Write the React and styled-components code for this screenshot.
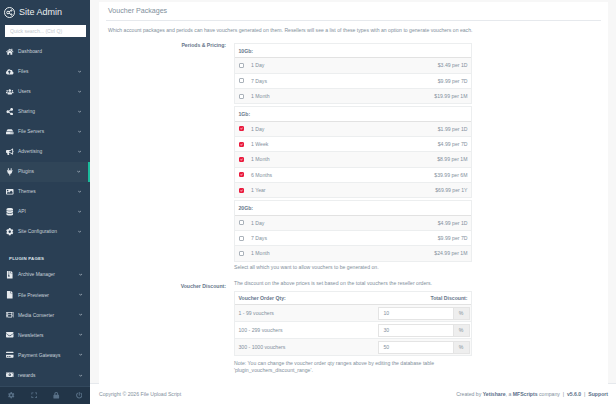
import React from "react";
import styled, { createGlobalStyle } from "styled-components";
import {
  FaHome, FaCloudUploadAlt, FaUsers, FaShareAlt, FaHdd, FaBullhorn, FaPlug, FaImage, FaDatabase, FaCog,
  FaFileArchive, FaFile, FaFilm, FaEnvelope, FaCreditCard, FaMoneyBillAlt, FaChevronDown, FaLock, FaPowerOff, FaExpand,
} from "react-icons/fa";

const GlobalStyle = createGlobalStyle`
  html, body { margin: 0; padding: 0; height: 100%; overflow: hidden; }
  body { font-family: "Liberation Sans", Arial, sans-serif; color: #828f9c; background: #f7f7f7; }
`;

const Page = styled.div`
  display: flex;
  width: 616px;
  height: 404px;
  overflow: hidden;
`;

const Sidebar = styled.aside`
  width: 90px;
  flex: none;
  display: flex;
  flex-direction: column;
  background: #2a3f54;
`;
const Brand = styled.div`
  height: 24px;
  display: flex;
  align-items: center;
  gap: 4px;
  padding: 0 0 0 4px;
  font-size: 9px;
  color: #ecf0f1;
`;
const BrandLogo = styled.span`
  width: 11px;
  height: 11px;
  border: 1px solid #ecf0f1;
  border-radius: 50%;
  display: flex;
  align-items: center;
  justify-content: center;
  box-sizing: border-box;
`;
const Search = styled.input`
  display: block;
  width: 81px;
  height: 11.5px;
  margin: 1px 0 5px 5px;
  padding: 0 0 0 5px;
  box-sizing: border-box;
  border: 0;
  background: #fff;
  font: 5.1px "Liberation Sans", Arial, sans-serif;
  &::placeholder { color: #c2c8ce; }
`;
const Item = styled.div`
  height: 20.05px;
  display: flex;
  align-items: center;
  padding-left: 6px;
  padding-right: ${(p) => p.$pad}px;
  font-size: 4.9px;
  color: #c9d2da;
  box-sizing: border-box;
  background: ${(p) => (p.$active ? "#304558" : "transparent")};
  border-right: ${(p) => (p.$active ? "2px solid #1abb9c" : "0")};
`;
const ItemIcon = styled.span`
  width: 12px;
  display: flex;
  font-size: 7.5px;
  color: #e6eaee;
`;
const ItemLabel = styled.span`
  flex: 1;
`;
const Chevron = styled(FaChevronDown)`
  font-size: 3.4px;
  color: #b4bfc9;
`;
const MenuTitle = styled.div`
  height: 12px;
  margin-top: 11px;
  padding-left: 9px;
  display: flex;
  align-items: center;
  font-size: 4.4px;
  font-weight: bold;
  letter-spacing: 0.2px;
  color: #dfe4e9;
`;
const SideFooter = styled.div`
  margin-top: auto;
  height: 18px;
  display: flex;
  align-items: center;
  justify-content: space-around;
  background: #223548;
  border-top: 1px solid #33495e;
  box-sizing: border-box;
  font-size: 6.5px;
  color: #587087;
`;

const Main = styled.main`
  flex: 1;
  min-width: 0;
  display: flex;
  flex-direction: column;
`;
const Content = styled.div`
  height: 384px;
  padding: 2px 8px 0 9px;
  box-sizing: border-box;
  border-bottom: 1px solid #e6e9ed;
`;
const Panel = styled.section`
  height: 382px;
  background: #fff;
  padding: 0 7px;
  box-sizing: border-box;
`;
const Title = styled.h2`
  margin: 0;
  height: 19px;
  box-sizing: border-box;
  padding: 5px 0 0 2px;
  font-size: 7.1px;
  line-height: 8px;
  font-weight: normal;
  border-bottom: 1px solid #e6e9ed;
`;
const Intro = styled.p`
  margin: 5.5px 0 0 2px;
  font-size: 5.12px;
  line-height: 7px;
  white-space: nowrap;
`;
const FormRow = styled.div`
  display: grid;
  grid-template-columns: 120px 238px;
  column-gap: 8px;
  margin-top: ${(p) => p.$top}px;
`;
const Label = styled.div`
  text-align: right;
  font-size: 5.15px;
  line-height: 6px;
  font-weight: bold;
  color: #66768a;
  padding-top: ${(p) => p.$top}px;
`;
const Field = styled.div`
  padding-top: ${(p) => p.$top}px;
`;
const Table = styled.div`
  border-left: 1px solid #eceeef;
  border-right: 1px solid #eceeef;
  margin-bottom: ${(p) => p.$gap}px;
  font-size: 5.15px;
`;
const HeadRow = styled.div`
  height: ${(p) => p.$h}px;
  box-sizing: border-box;
  display: flex;
  align-items: center;
  justify-content: space-between;
  padding: 0 3.5px;
  font-weight: bold;
  color: #66768a;
  border-top: 1px solid #eceeef;
  border-bottom: 1.5px solid #e2e2e2;
`;
const Row = styled.div`
  height: ${(p) => p.$h}px;
  box-sizing: border-box;
  display: flex;
  align-items: center;
  padding: 0 ${(p) => p.$right}px 0 3.5px;
  background: ${(p) => (p.$odd ? "#f9f9f9" : "#fff")};
  border-bottom: 1px solid #eceeef;
`;
const Check = styled.span`
  width: 5px;
  height: 5px;
  flex: none;
  box-sizing: border-box;
  margin-right: 7.5px;
  border: 1px solid ${(p) => (p.$on ? "#ea1c3f" : "#aab2ba")};
  border-radius: 1px;
  background: ${(p) => (p.$on ? "#ea1c3f" : "#fff")};
  display: flex;
`;
const Price = styled.span`
  margin-left: auto;
`;
const Help = styled.p`
  margin: 0 0 ${(p) => p.$gap || 0}px;
  font-size: 5.15px;
  line-height: 7px;
  white-space: nowrap;
`;
const InputGroup = styled.div`
  margin-left: auto;
  width: 92px;
  height: 13px;
  display: flex;
  font-size: 5.15px;
`;
const NumberBox = styled.div`
  flex: 1;
  background: #fff;
  border: 1px solid #e4e4e4;
  display: flex;
  align-items: center;
  padding-left: 5px;
`;
const Addon = styled.div`
  width: 15px;
  background: #eeeeee;
  border: 1px solid #e4e4e4;
  border-left: 0;
  display: flex;
  align-items: center;
  justify-content: center;
`;
const Footer = styled.footer`
  flex: 1;
  background: #fff;
  display: flex;
  align-items: center;
  justify-content: space-between;
  padding: 0 8px 0 9px;
  font-size: 5.15px;
`;
const Strong = styled.b`
  color: #5a6f88;
`;

const menu = [
  [FaHome, "Dashboard", false],
  [FaCloudUploadAlt, "Files", true],
  [FaUsers, "Users", true],
  [FaShareAlt, "Sharing", true],
  [FaHdd, "File Servers", true],
  [FaBullhorn, "Advertising", true],
  [FaPlug, "Plugins", true, true],
  [FaImage, "Themes", true],
  [FaDatabase, "API", true],
  [FaCog, "Site Configuration", true],
];
const pluginMenu = [
  [FaFileArchive, "Archive Manager"],
  [FaFile, "File Previewer"],
  [FaFilm, "Media Converter"],
  [FaEnvelope, "Newsletters"],
  [FaCreditCard, "Payment Gateways"],
  [FaMoneyBillAlt, "rewards"],
];

const packages = [
  { name: "10Gb:", on: false, rows: [["1 Day", "$3.49 per 1D"], ["7 Days", "$9.99 per 7D"], ["1 Month", "$19.99 per 1M"]] },
  { name: "1Gb:", on: true, rows: [["1 Day", "$1.99 per 1D"], ["1 Week", "$4.99 per 7D"], ["1 Month", "$8.99 per 1M"], ["6 Months", "$39.99 per 6M"], ["1 Year", "$69.99 per 1Y"]] },
  { name: "20Gb:", on: false, rows: [["1 Day", "$4.99 per 1D"], ["7 Days", "$9.99 per 7D"], ["1 Month", "$24.99 per 1M"]] },
];
const discounts = [["1 - 99 vouchers", "10"], ["100 - 299 vouchers", "30"], ["300 - 1000 vouchers", "50"]];

const MenuItem = ({ icon: Icon, label, more, active, pad }) => (
  <Item $active={active} $pad={pad}>
    <ItemIcon><Icon /></ItemIcon>
    <ItemLabel>{label}</ItemLabel>
    {more && <Chevron />}
  </Item>
);

const Logo = () => (
  <BrandLogo>
    <svg width="7" height="7" viewBox="0 0 14 14" fill="none" stroke="#ecf0f1" strokeWidth="2">
      <circle cx="4" cy="7" r="2.6" />
      <path d="M11 2 L6 6 M11 12 L6 8" />
      <circle cx="11" cy="3" r="1.2" />
      <circle cx="11" cy="11" r="1.2" />
    </svg>
  </BrandLogo>
);

const Tick = () => (
  <svg width="3" height="3" viewBox="0 0 6 6" fill="none" stroke="#fff" strokeWidth="1.4">
    <path d="M1 3.2 L2.5 4.6 L5 1.4" />
  </svg>
);

const App = () => (
  <Page>
    <GlobalStyle />
    <Sidebar>
      <Brand><Logo />Site Admin</Brand>
      <Search placeholder="Quick search... (Ctrl Q)" />
      {menu.map(([icon, label, more, active]) => (
        <MenuItem key={label} icon={icon} label={label} more={more} active={active} pad={active ? 7.5 : 9} />
      ))}
      <MenuTitle>PLUGIN PAGES</MenuTitle>
      {pluginMenu.map(([icon, label]) => (
        <MenuItem key={label} icon={icon} label={label} more pad={7.5} />
      ))}
      <SideFooter>
        <FaCog />
        <FaExpand />
        <FaLock />
        <FaPowerOff />
      </SideFooter>
    </Sidebar>
    <Main>
      <Content>
        <Panel>
          <Title>Voucher Packages</Title>
          <Intro>Which account packages and periods can have vouchers generated on them. Resellers will see a list of these types with an option to generate vouchers on each.</Intro>
          <FormRow $top={8.5}>
            <Label $top={0}>Periods &amp; Pricing:</Label>
            <Field $top={1}>
              {packages.map((pack) => (
                <Table key={pack.name} $gap={2}>
                  <HeadRow $h={15.33}>{pack.name}</HeadRow>
                  {pack.rows.map(([period, price], i) => (
                    <Row key={period} $odd={i % 2 === 0} $h={15.33} $right={3.5}>
                      <Check $on={pack.on}>{pack.on && <Tick />}</Check>
                      {period}
                      <Price>{price}</Price>
                    </Row>
                  ))}
                </Table>
              ))}
              <Help>Select all which you want to allow vouchers to be generated on.</Help>
            </Field>
          </FormRow>
          <FormRow $top={9}>
            <Label $top={3}>Voucher Discount:</Label>
            <Field $top={0}>
              <Help $gap={4}>The discount on the above prices is set based on the total vouchers the reseller orders.</Help>
              <Table $gap={3.5}>
                <HeadRow $h={14.5}>
                  <span>Voucher Order Qty:</span>
                  <span>Total Discount:</span>
                </HeadRow>
                {discounts.map(([range, value], i) => (
                  <Row key={range} $odd={i % 2 === 0} $h={17} $right={1.5}>
                    {range}
                    <InputGroup>
                      <NumberBox>{value}</NumberBox>
                      <Addon>%</Addon>
                    </InputGroup>
                  </Row>
                ))}
              </Table>
              <Help>Note: You can change the voucher order qty ranges above by editing the database table</Help>
              <Help>'plugin_vouchers_discount_range'.</Help>
            </Field>
          </FormRow>
        </Panel>
      </Content>
      <Footer>
        <span>Copyright © 2026 File Upload Script</span>
        <span>
          Created by <Strong>Yetishare</Strong>, a <Strong>MFScripts</Strong> company &nbsp;|&nbsp; <Strong>v5.6.0</Strong> &nbsp;|&nbsp; <Strong>Support</Strong>
        </span>
      </Footer>
    </Main>
  </Page>
);

export default App;
